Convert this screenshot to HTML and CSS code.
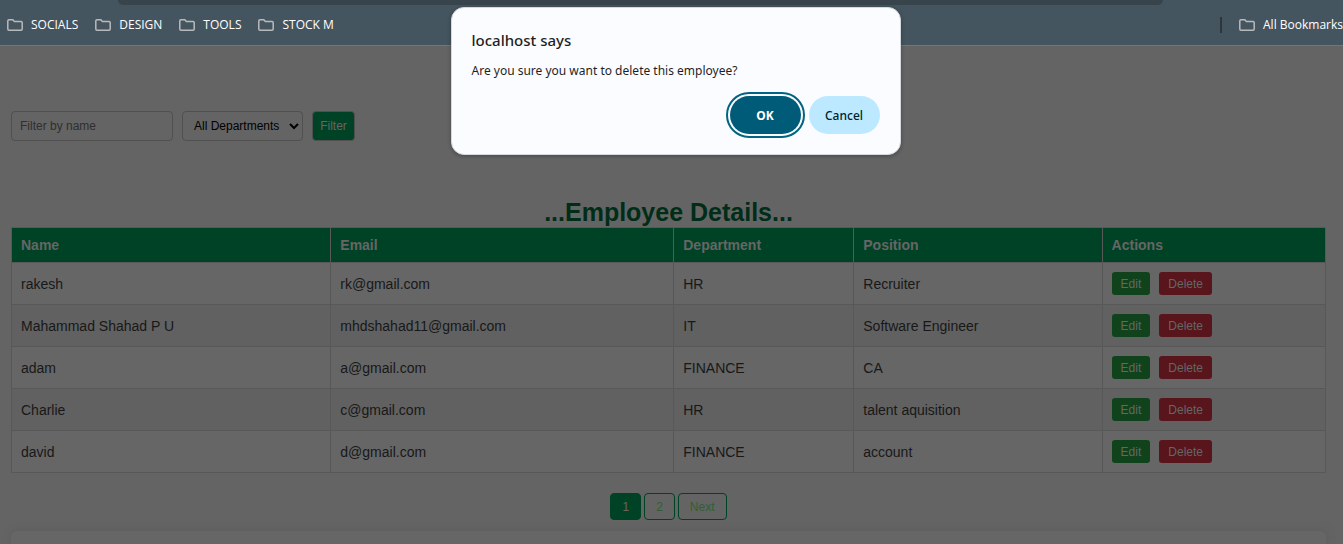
FILE: index.html
```html
<!DOCTYPE html>
<html lang="en">
<head>
<meta charset="utf-8">
<title>Employee Details</title>
<link rel="stylesheet" href="styles.css">
</head>
<body>
<svg class="sprite" aria-hidden="true">
  <symbol id="folder" viewBox="0 0 16 12">
    <path d="M2 .8H5.8L7.4 2.6H14Q15.2 2.6 15.2 3.8V10Q15.2 11.2 14 11.2H2Q.8 11.2 .8 10V2Q.8 .8 2 .8Z" fill="none" stroke="currentColor" stroke-width="1.5"/>
  </symbol>
</svg>
<header class="browser">
  <div class="address"></div>
  <nav class="bookmarks" aria-label="Bookmarks">
    <a class="bookmark" href="#"><svg class="folder"><use href="#folder"/></svg>SOCIALS</a>
    <a class="bookmark" href="#"><svg class="folder"><use href="#folder"/></svg>DESIGN</a>
    <a class="bookmark" href="#"><svg class="folder"><use href="#folder"/></svg>TOOLS</a>
    <a class="bookmark" href="#"><svg class="folder"><use href="#folder"/></svg>STOCK M</a>
    <span class="divider"></span>
    <a class="bookmark" href="#"><svg class="folder"><use href="#folder"/></svg>All Bookmarks</a>
  </nav>
</header>
<main class="page">
  <form class="filters">
    <input class="field" type="text" placeholder="Filter by name" aria-label="Filter by name">
    <select class="field choice" aria-label="Department"><option>All Departments</option><option>HR</option><option>IT</option><option>FINANCE</option></select>
    <button class="apply" type="button">Filter</button>
  </form>
  <h2 class="title">...Employee Details...</h2>
  <table class="employees">
    <colgroup><col class="col-name"><col class="col-email"><col class="col-department"><col class="col-position"><col></colgroup>
    <thead>
      <tr><th>Name</th><th>Email</th><th>Department</th><th>Position</th><th>Actions</th></tr>
    </thead>
    <tbody>
      <tr><td>rakesh</td><td>rk@gmail.com</td><td>HR</td><td>Recruiter</td><td><div class="actions"><button class="edit">Edit</button><button class="delete">Delete</button></div></td></tr>
      <tr><td>Mahammad Shahad P U</td><td>mhdshahad11@gmail.com</td><td>IT</td><td>Software Engineer</td><td><div class="actions"><button class="edit">Edit</button><button class="delete">Delete</button></div></td></tr>
      <tr><td>adam</td><td>a@gmail.com</td><td>FINANCE</td><td>CA</td><td><div class="actions"><button class="edit">Edit</button><button class="delete">Delete</button></div></td></tr>
      <tr><td>Charlie</td><td>c@gmail.com</td><td>HR</td><td>talent aquisition</td><td><div class="actions"><button class="edit">Edit</button><button class="delete">Delete</button></div></td></tr>
      <tr><td>david</td><td>d@gmail.com</td><td>FINANCE</td><td>account</td><td><div class="actions"><button class="edit">Edit</button><button class="delete">Delete</button></div></td></tr>
    </tbody>
  </table>
  <nav class="pager" aria-label="Pages">
    <button class="page-button current" aria-current="page">1</button>
    <button class="page-button">2</button>
    <button class="page-button">Next</button>
  </nav>
  <section class="card"></section>
</main>
<div class="dialog" role="alertdialog" aria-labelledby="dialog-title" aria-describedby="dialog-text">
  <h1 class="dialog-title" id="dialog-title">localhost says</h1>
  <p class="dialog-text" id="dialog-text">Are you sure you want to delete this employee?</p>
  <div class="dialog-buttons">
    <button class="dialog-button ok">OK</button>
    <button class="dialog-button cancel">Cancel</button>
  </div>
</div>
</body>
</html>
```
FILE: styles.css
```css
* { box-sizing: border-box; }

body {
  margin: 0;
  min-height: 100vh;
  display: flex;
  flex-direction: column;
  overflow: hidden;
  background: #646464;
  color: #181818;
  font-family: "Liberation Sans", Arial, sans-serif;
  font-size: 14px;
}

button, input, select { font-family: inherit; font-size: 12px; }
button { border: 0; padding: 0; }
.sprite { display: none; }

/* Browser bar */
.browser {
  background: #45555f;
  border-bottom: 1px solid #6b7880;
}
.address {
  height: 5px;
  margin: 0 180px 0 118px;
  border-radius: 0 0 16px 16px;
  background: #38444b;
}
.bookmarks {
  display: flex;
  align-items: center;
  gap: 17px;
  height: 40px;
  padding-left: 7px;
}
.bookmark {
  display: flex;
  align-items: center;
  gap: 8px;
  color: #fff;
  font: 12px/16px "Open Sans", "Noto Sans", sans-serif;
  text-decoration: none;
  white-space: nowrap;
}
.folder { width: 16px; height: 12px; color: #b9babb; }
.divider { width: 2px; height: 16px; margin-left: auto; background: #2b363d; }

/* Page */
.page {
  flex: 1;
  display: flex;
  flex-direction: column;
  padding: 65px 17px 0 11px;
}
.filters { display: flex; align-items: center; gap: 9px; }
.field {
  width: 162px;
  height: 30px;
  padding: 0 8px;
  border: 1px solid #505050;
  border-radius: 4px;
  background: #646464;
  color: #000;
}
.field::placeholder { color: #2f2f2f; opacity: 1; }
.choice { width: 121px; padding: 0 0 0 7px; }
.apply {
  width: 43px;
  height: 30px;
  border: 1px solid #505050;
  border-radius: 4px;
  background: #004225;
  color: #666;
}
.title {
  margin: 57px 0 0;
  color: #002d17;
  font-size: 25px;
  line-height: 29px;
  text-align: center;
}
.employees {
  width: 100%;
  table-layout: fixed;
  border-collapse: collapse;
  background: #666;
}
.col-name { width: 24.3%; }
.col-email { width: 26.1%; }
.col-department { width: 13.7%; }
.col-position { width: 18.9%; }
.employees th, .employees td {
  padding: 0 9px;
  border: 1px solid #585858;
  text-align: left;
}
.employees th { height: 35px; background: #004225; color: #666; }
.employees td { height: 42px; }
.employees tbody tr:nth-child(even) { background: #616161; }
.actions { display: flex; gap: 9px; }
.edit, .delete {
  height: 23px;
  padding: 0 9px;
  border-radius: 3px;
  color: #666;
}
.edit { background: #10431c; }
.delete { background: #58151c; }

.pager { display: flex; justify-content: center; gap: 3px; margin-top: 20px; }
.page-button {
  height: 27px;
  padding: 0 11px;
  border: 1px solid #004225;
  border-radius: 4px;
  background: transparent;
  color: #2f6035;
}
.current { background: #004225; color: #666; }
.card {
  flex: 1;
  margin-top: 11px;
  border-radius: 6px 6px 0 0;
  background: #666;
  box-shadow: 0 0 8px #5c5c5c;
}

/* Confirmation dialog */
.dialog {
  position: absolute;
  top: 7px;
  left: 50%;
  width: 450px;
  margin-left: -221px;
  padding: 20px;
  border: 1px solid #d4d9dc;
  border-radius: 13px;
  background: #fbfcff;
  box-shadow: 0 1px 4px #0000004d;
  color: #1f1f1f;
  font-family: "Noto Sans", "Open Sans", sans-serif;
}
.dialog-title { margin: 0; font-size: 15px; font-weight: 500; line-height: 24px; }
.dialog-text { margin: 9px 0 15px; font-size: 12px; line-height: 20px; }
.dialog-buttons { display: flex; justify-content: flex-end; gap: 8px; }
.dialog-button {
  width: 71px;
  height: 38px;
  border-radius: 19px;
  font-size: 12px;
  font-weight: 500;
}
.ok { background: #005b78; color: #fff; font-weight: 700; outline: 2px solid #006482; outline-offset: 2px; }
.cancel { background: #bce9ff; color: #001f2a; }
```
